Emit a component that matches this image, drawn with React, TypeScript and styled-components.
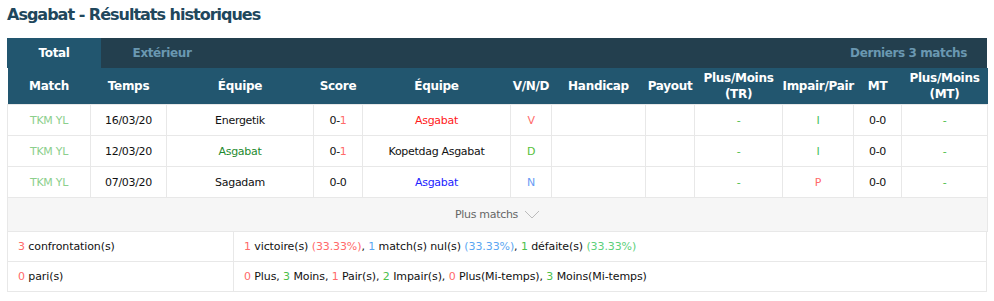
import styled, { createGlobalStyle } from 'styled-components';

const GlobalStyle = createGlobalStyle`
  body {
    margin: 0;
    background: #fff;
    font-family: "DejaVu Sans", Verdana, sans-serif;
  }
`;

const Wrap = styled.div`
  padding: 0 7px;
  width: 980px;
`;

const Title = styled.h2`
  margin: 0;
  height: 38px;
  line-height: 29px;
  font-size: 16px;
  font-weight: bold;
  color: #21475c;
  letter-spacing: -1px;
`;

const TabBar = styled.div`
  display: flex;
  align-items: stretch;
  height: 30px;
  background: #233f4e;
  font-size: 12px;
  font-weight: bold;
  letter-spacing: -0.4px;
`;

const Tab = styled.div<{ $active?: boolean }>`
  width: ${(p) => (p.$active ? '94px' : '122px')};
  display: flex;
  align-items: center;
  justify-content: center;
  background: ${(p) => (p.$active ? '#22566f' : 'transparent')};
  color: ${(p) => (p.$active ? '#fff' : '#6a98b1')};
`;

const TabInfo = styled.div`
  margin-left: auto;
  padding-right: 20px;
  display: flex;
  align-items: center;
  color: #6a98b1;
`;

const Table = styled.table`
  width: 980px;
  border-collapse: collapse;
  table-layout: fixed;
  font-size: 11px;
  letter-spacing: -0.3px;
`;

const Th = styled.th`
  background: #22566f;
  color: #fff;
  font-size: 12px;
  font-weight: bold;
  height: 36px;
  line-height: 16px;
  padding: 0;
  text-align: center;
`;

const Td = styled.td`
  height: 30px;
  padding: 0;
  text-align: center;
  color: #111;
  border: 1px solid #e8e8e8;
`;

const MoreCell = styled.td`
  height: 33px;
  background: #f6f6f6;
  text-align: center;
  color: #666;
  border: 1px solid #e8e8e8;
  padding: 0;
`;

const Summary = styled.div`
  display: grid;
  grid-template-columns: 226px 1fr;
  grid-auto-rows: 30px;
  border-left: 1px solid #e8e8e8;
  border-right: 1px solid #e8e8e8;
  font-size: 11px;
  letter-spacing: -0.1px;
  color: #111;
`;

const SumCell = styled.div<{ $first?: boolean }>`
  display: flex;
  align-items: center;
  white-space: pre;
  padding: 0 10px;
  border-bottom: 1px solid #e8e8e8;
  border-right: ${(p) => (p.$first ? '1px solid #e8e8e8' : 'none')};
`;

const C = styled.span<{ $c: string }>`
  color: ${(p) => p.$c};
`;

const Chevron = styled.svg`
  vertical-align: middle;
  margin-left: 6px;
  margin-top: -2px;
`;

const RED = '#ff6a6a';
const BLUE = '#5aa6f2';
const GREEN = '#4cc04c';
const LEAGUE = '#8ccf8c';

const widths = [83, 76, 147, 49, 148, 41, 94, 49, 88, 71, 48, 86];

type Row = {
  date: string
  home: string
  homeColor: string
  score: [string, string]
  scoreColor: string
  away: string
  awayColor: string
  result: string
  resultColor: string
  oddEven: string
  oddEvenColor: string
};

const rows: Row[] = [
  { date: '16/03/20', home: 'Energetik', homeColor: '#111', score: ['0-', '1'], scoreColor: RED, away: 'Asgabat', awayColor: '#ff1a1a', result: 'V', resultColor: RED, oddEven: 'I', oddEvenColor: '#3fbf5a' },
  { date: '12/03/20', home: 'Asgabat', homeColor: '#1e8a2e', score: ['0-', '1'], scoreColor: RED, away: 'Kopetdag Asgabat', awayColor: '#111', result: 'D', resultColor: '#55c03a', oddEven: 'I', oddEvenColor: '#3fbf5a' },
  { date: '07/03/20', home: 'Sagadam', homeColor: '#111', score: ['0-', '0'], scoreColor: '#111', away: 'Asgabat', awayColor: '#2222ff', result: 'N', resultColor: '#6b9cf5', oddEven: 'P', oddEvenColor: RED },
];

const headers = ['Match', 'Temps', 'Équipe', 'Score', 'Équipe', 'V/N/D', 'Handicap', 'Payout', 'Plus/Moins (TR)', 'Impair/Pair', 'MT', 'Plus/Moins (MT)'];

const App = () => (
  <Wrap>
    <GlobalStyle />
    <Title>Asgabat - Résultats historiques</Title>
    <TabBar>
      <Tab $active>Total</Tab>
      <Tab>Extérieur</Tab>
      <TabInfo>Derniers 3 matchs</TabInfo>
    </TabBar>
    <Table>
      <colgroup>
        {widths.map((w, i) => <col key={i} style={{ width: w }} />)}
      </colgroup>
      <thead>
        <tr>
          {headers.map((h, i) => <Th key={i}>{h.includes('(') ? <>{h.split(' ')[0]}<br />{h.split(' ')[1]}</> : h}</Th>)}
        </tr>
      </thead>
      <tbody>
        {rows.map((r) => (
          <tr key={r.date}>
            <Td><C $c={LEAGUE}>TKM YL</C></Td>
            <Td>{r.date}</Td>
            <Td><C $c={r.homeColor}>{r.home}</C></Td>
            <Td>{r.score[0]}<C $c={r.scoreColor}>{r.score[1]}</C></Td>
            <Td><C $c={r.awayColor}>{r.away}</C></Td>
            <Td><C $c={r.resultColor}>{r.result}</C></Td>
            <Td></Td>
            <Td></Td>
            <Td><C $c={GREEN}>-</C></Td>
            <Td><C $c={r.oddEvenColor}>{r.oddEven}</C></Td>
            <Td>0-0</Td>
            <Td><C $c={GREEN}>-</C></Td>
          </tr>
        ))}
        <tr>
          <MoreCell colSpan={12}>
            Plus matchs
            <Chevron width="16" height="9" viewBox="0 0 16 9">
              <path d="M1 1 L8 8 L15 1" fill="none" stroke="#bbb" strokeWidth="1" />
            </Chevron>
          </MoreCell>
        </tr>
      </tbody>
    </Table>
    <Summary>
      <SumCell $first><C $c={RED}>3</C> confrontation(s)</SumCell>
      <SumCell>
        <C $c={RED}>1</C> victoire(s) <C $c={RED}>(33.33%)</C>, <C $c={BLUE}>1</C> match(s) nul(s) <C $c={BLUE}>(33.33%)</C>, <C $c={GREEN}>1</C> défaite(s) <C $c="#5ccf7a">(33.33%)</C>
      </SumCell>
      <SumCell $first><C $c={RED}>0</C> pari(s)</SumCell>
      <SumCell>
        <C $c={RED}>0</C> Plus, <C $c={GREEN}>3</C> Moins, <C $c={RED}>1</C> Pair(s), <C $c={GREEN}>2</C> Impair(s), <C $c={RED}>0</C> Plus(Mi-temps), <C $c={GREEN}>3</C> Moins(Mi-temps)
      </SumCell>
    </Summary>
  </Wrap>
);

export default App;
